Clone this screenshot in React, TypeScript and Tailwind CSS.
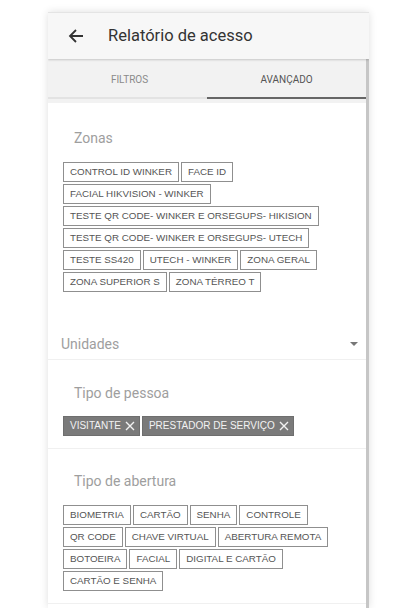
import React, { useState } from "react";

const zonas = [
  "CONTROL ID WINKER",
  "FACE ID",
  "FACIAL HIKVISION - WINKER",
  "TESTE QR CODE- WINKER E ORSEGUPS- HIKISION",
  "TESTE QR CODE- WINKER E ORSEGUPS- UTECH",
  "TESTE SS420",
  "UTECH - WINKER",
  "ZONA GERAL",
  "ZONA SUPERIOR S",
  "ZONA TÉRREO T",
];

const tiposAbertura = [
  "BIOMETRIA",
  "CARTÃO",
  "SENHA",
  "CONTROLE",
  "QR CODE",
  "CHAVE VIRTUAL",
  "ABERTURA REMOTA",
  "BOTOEIRA",
  "FACIAL",
  "DIGITAL E CARTÃO",
  "CARTÃO E SENHA",
];

const chipFont = { fontFamily: "'Liberation Sans', Arial, sans-serif" };

const Chip: React.FC<{ label: string }> = ({ label }) => (
  <span
    style={chipFont}
    className="h-[20px] px-[6px] flex items-center border border-[#8f8f8f] bg-white text-[9.8px] text-[#555] leading-none whitespace-nowrap"
  >
    {label}
  </span>
);

const FilledChip: React.FC<{ label: string; onRemove: () => void }> = ({
  label,
  onRemove,
}) => (
  <span
    style={chipFont}
    className="h-[20px] pl-[6px] pr-[4px] flex items-center gap-[4px] border border-[#6e6e6e] bg-[#7a7a7a] text-[10px] text-[#f2f2f2] leading-none whitespace-nowrap"
  >
    {label}
    <button type="button" onClick={onRemove} className="flex items-center">
      <svg width="10" height="10" viewBox="0 0 10 10">
        <path
          d="M1 1 L9 9 M9 1 L1 9"
          stroke="#f2f2f2"
          strokeWidth="1.4"
          fill="none"
        />
      </svg>
    </button>
  </span>
);

const App: React.FC = () => {
  const [tab, setTab] = useState<"filtros" | "avancado">("avancado");
  const [pessoas, setPessoas] = useState<string[]>([
    "VISITANTE",
    "PRESTADOR DE SERVIÇO",
  ]);

  return (
    <div
      className="min-h-[608px] bg-white pl-[48px] pt-[12px]"
      style={{ fontFamily: "Roboto, 'Liberation Sans', sans-serif" }}
    >
      <div className="w-[321px] h-[596px] overflow-hidden flex flex-col shadow-[0_0_8px_rgba(0,0,0,0.13)]">
        <header className="h-[47px] shrink-0 flex items-center pl-[20px] bg-[#f7f7f7] border-t border-[#e4e4e4] shadow-[0_1px_2px_rgba(0,0,0,0.18)] relative z-10">
          <svg width="16" height="16" viewBox="0 0 16 16">
            <path
              d="M15 8 H2 M8 2 L2 8 L8 14"
              stroke="#333"
              strokeWidth="1.8"
              fill="none"
            />
          </svg>
          <h1 className="ml-[24px] text-[16.5px] text-[#333]">
            Relatório de acesso
          </h1>
        </header>

        <div className="flex flex-1 min-h-0">
          <div className="flex-1 flex flex-col">
            <div className="bg-[#f2f2f2] pb-[4px]">
              <div className="flex">
                <button
                  type="button"
                  onClick={() => setTab("filtros")}
                  className={`flex-1 h-[40px] pt-[3px] flex flex-col text-[10px] ${
                    tab === "filtros" ? "text-[#555]" : "text-[#8a8a8a]"
                  }`}
                >
                  <span className="flex-1 flex items-center justify-center pl-[4px]">
                    FILTROS
                  </span>
                  <span
                    className={`h-[2px] w-full ${
                      tab === "filtros" ? "bg-[#666]" : "bg-[#e3e3e3]"
                    }`}
                  />
                </button>
                <button
                  type="button"
                  onClick={() => setTab("avancado")}
                  className={`flex-1 h-[40px] pt-[3px] flex flex-col text-[10px] ${
                    tab === "avancado" ? "text-[#555]" : "text-[#8a8a8a]"
                  }`}
                >
                  <span className="flex-1 flex items-center justify-center">
                    AVANÇADO
                  </span>
                  <span
                    className={`h-[2px] w-full ${
                      tab === "avancado" ? "bg-[#666]" : "bg-[#e3e3e3]"
                    }`}
                  />
                </button>
              </div>
            </div>

            <div className="flex-1 bg-white">
              <section className="pt-[25px] pl-[15px]">
                <div className="pl-[11px] text-[14px] leading-[20px] text-[#9e9e9e]">
                  Zonas
                </div>
                <div className="mt-[14px] flex flex-wrap gap-[2px] pr-[30px]">
                  {zonas.map((z) => (
                    <Chip key={z} label={z} />
                  ))}
                </div>
              </section>

              <div className="mt-[33px] h-[35px] pl-[13px] pr-[8px] pb-[5px] flex items-end justify-between border-b border-[#f0f0f0]">
                <span className="text-[14px] leading-[20px] text-[#9e9e9e]">
                  Unidades
                </span>
                <span className="mb-[8px] w-0 h-0 border-l-[4px] border-r-[4px] border-t-[4px] border-l-transparent border-r-transparent border-t-[#777]" />
              </div>

              <section className="pt-[23px] pb-[12px] pl-[15px] border-b border-[#f0f0f0]">
                <div className="pl-[11px] text-[14px] leading-[20px] text-[#9e9e9e]">
                  Tipo de pessoa
                </div>
                <div className="mt-[13px] flex flex-wrap gap-[2px]">
                  {pessoas.map((p) => (
                    <FilledChip
                      key={p}
                      label={p}
                      onRemove={() =>
                        setPessoas(pessoas.filter((x) => x !== p))
                      }
                    />
                  ))}
                </div>
              </section>

              <section className="pt-[22px] pb-[12px] pl-[15px] border-b border-[#f0f0f0]">
                <div className="pl-[11px] text-[14px] leading-[20px] text-[#9e9e9e]">
                  Tipo de abertura
                </div>
                <div className="mt-[14px] flex flex-wrap gap-[2px] pr-[30px]">
                  {tiposAbertura.map((t) => (
                    <Chip key={t} label={t} />
                  ))}
                </div>
              </section>
            </div>
          </div>
          <div className="w-[3px] bg-[#c6c6c6]" />
        </div>
      </div>
    </div>
  );
};

export default App;
